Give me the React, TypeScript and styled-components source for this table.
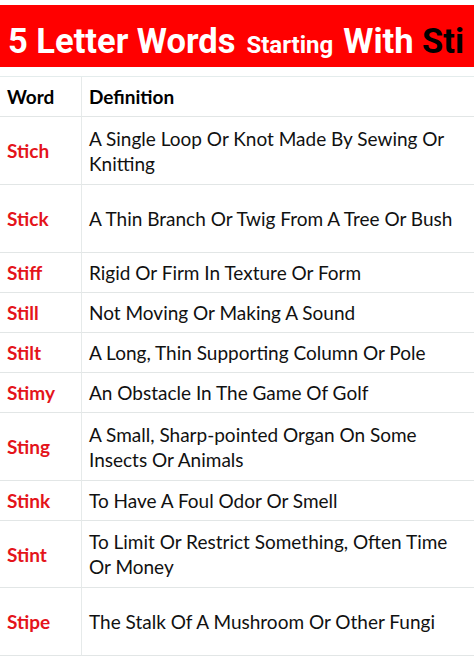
import React from "react";
import styled, { createGlobalStyle } from "styled-components";

const Global = createGlobalStyle`
  html, body { margin: 0; padding: 0; background: #ffffff; }
  body { width: 474px; overflow: hidden; }
`;

const Page = styled.div`
  width: 474px;
  height: 670px;
  padding-top: 5px;
  box-sizing: border-box;
  background: #ffffff;
`;

const Banner = styled.div`
  height: 62px;
  background: #ff0000;
  display: flex;
  align-items: baseline;
  padding: 18px 0 0 8px;
  box-sizing: border-box;
  font-family: Roboto, "Liberation Sans", sans-serif;
  font-weight: 700;
  color: #ffffff;
  white-space: nowrap;
`;

const Big = styled.span<{ $dark?: boolean }>`
  font-size: 34.5px;
  line-height: 36px;
  color: ${(p) => (p.$dark ? "#000000" : "#ffffff")};
`;

const Small = styled.span`
  font-size: 24px;
  margin: 0 10px 0 11px;
`;

const Table = styled.div`
  margin-top: 9px;
  display: grid;
  grid-template-columns: 82px 1fr;
  border-top: 1px solid #e4ecec;
  font-family: Lato, "Open Sans", sans-serif;
  font-size: 19px;
  color: #111111;
`;

const Cell = styled.div<{ $h: number; $first?: boolean }>`
  height: ${(p) => p.$h - 1}px;
  border-bottom: 1px solid #e2e6e6;
  border-right: ${(p) => (p.$first ? "1px solid #e6eaea" : "none")};
  display: flex;
  align-items: center;
  padding-left: 7px;
  padding-right: 8px;
  line-height: 25px;
`;

const HeadText = styled.span`
  font-weight: 700;
  color: #000000;
`;

const WordText = styled.span`
  font-weight: 700;
  color: #e4141b;
`;

const rows: [string, string, number][] = [
  ["Stich", "A Single Loop Or Knot Made By Sewing Or Knitting", 68],
  ["Stick", "A Thin Branch Or Twig From A Tree Or Bush", 68],
  ["Stiff", "Rigid Or Firm In Texture Or Form", 40],
  ["Still", "Not Moving Or Making A Sound", 40],
  ["Stilt", "A Long, Thin Supporting Column Or Pole", 40],
  ["Stimy", "An Obstacle In The Game Of Golf", 40],
  ["Sting", "A Small, Sharp-pointed Organ On Some Insects Or Animals", 68],
  ["Stink", "To Have A Foul Odor Or Smell", 40],
  ["Stint", "To Limit Or Restrict Something, Often Time Or Money", 67],
  ["Stipe", "The Stalk Of A Mushroom Or Other Fungi", 68],
];

export default function App() {
  return (
    <Page>
      <Global />
      <Banner>
        <Big>5 Letter Words</Big>
        <Small>Starting</Small>
        <Big>With&nbsp;</Big>
        <Big $dark>Sti</Big>
      </Banner>
      <Table>
        <Cell $h={40} $first>
          <HeadText>Word</HeadText>
        </Cell>
        <Cell $h={40}>
          <HeadText>Definition</HeadText>
        </Cell>
        {rows.map(([w, d, h]) => (
          <React.Fragment key={w}>
            <Cell $h={h} $first>
              <WordText>{w}</WordText>
            </Cell>
            <Cell $h={h}>{d}</Cell>
          </React.Fragment>
        ))}
      </Table>
    </Page>
  );
}
